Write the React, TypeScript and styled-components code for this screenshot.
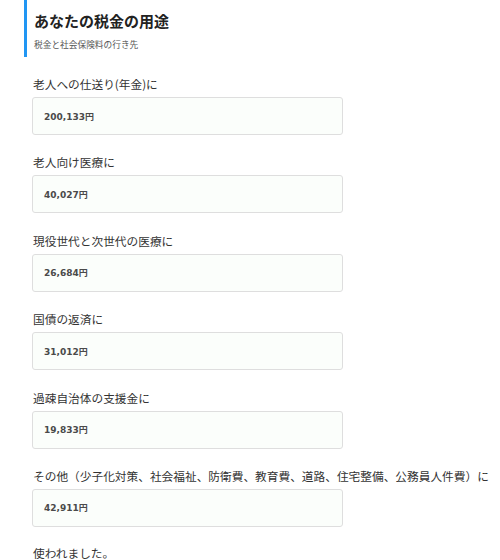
import React from 'react'
import styled, { createGlobalStyle } from 'styled-components'

const GlobalStyle = createGlobalStyle`
  body {
    margin: 0;
    background: #ffffff;
    font-family: "Noto Sans CJK JP", "Noto Sans", sans-serif;
    color: #333333;
  }
`

type Usage = {
  label: string
  amount: string
}

const usages: Usage[] = [
  { label: '老人への仕送り(年金)に', amount: '200,133円' },
  { label: '老人向け医療に', amount: '40,027円' },
  { label: '現役世代と次世代の医療に', amount: '26,684円' },
  { label: '国債の返済に', amount: '31,012円' },
  { label: '過疎自治体の支援金に', amount: '19,833円' },
  {
    label: 'その他（少子化対策、社会福祉、防衛費、教育費、道路、住宅整備、公務員人件費）に',
    amount: '42,911円',
  },
]

export default function App() {
  return (
    <Page>
      <GlobalStyle />
      <Header>
        <Title>あなたの税金の用途</Title>
        <Subtitle>税金と社会保険料の行き先</Subtitle>
      </Header>
      <List>
        {usages.map((u) => (
          <Item key={u.label}>
            <Label>{u.label}</Label>
            <AmountBox>{u.amount}</AmountBox>
          </Item>
        ))}
      </List>
      <Closing>使われました。</Closing>
    </Page>
  )
}

const Page = styled.div`
  width: 500px;
  height: 560px;
  overflow: hidden;
`
const Header = styled.div`
  margin-left: 24px;
  height: 57px;
  box-sizing: border-box;
  border-left: 3px solid #2196f3;
  padding: 11px 0 0 7px;
  display: flex;
  flex-direction: column;
`
const Title = styled.h2`
  margin: 0;
  font-size: 15px;
  line-height: 20px;
  font-weight: bold;
  color: #222222;
`
const Subtitle = styled.div`
  margin-top: 8px;
  font-size: 8.7px;
  line-height: 12px;
  color: #555555;
`
const List = styled.div`
  display: flex;
  flex-direction: column;
  gap: 18.4px;
  padding: 18px 0 0 32px;
`
const Item = styled.div`
  display: flex;
  flex-direction: column;
  gap: 4px;
`
const Label = styled.div`
  font-size: 11.7px;
  line-height: 18px;
  color: #333333;
  white-space: nowrap;
  padding-left: 1px;
`
const AmountBox = styled.div`
  width: 311px;
  height: 38px;
  box-sizing: border-box;
  border: 1px solid #dedede;
  border-radius: 3px;
  background: #fbfefb;
  padding-left: 11px;
  display: flex;
  align-items: center;
  font-family: "DejaVu Sans", "Noto Sans CJK JP", sans-serif;
  font-weight: bold;
  font-size: 9px;
  color: #4a4a4a;
`
const Closing = styled.div`
  margin: 17px 0 0 33px;
  font-size: 11.7px;
  line-height: 18px;
  color: #333333;
`
